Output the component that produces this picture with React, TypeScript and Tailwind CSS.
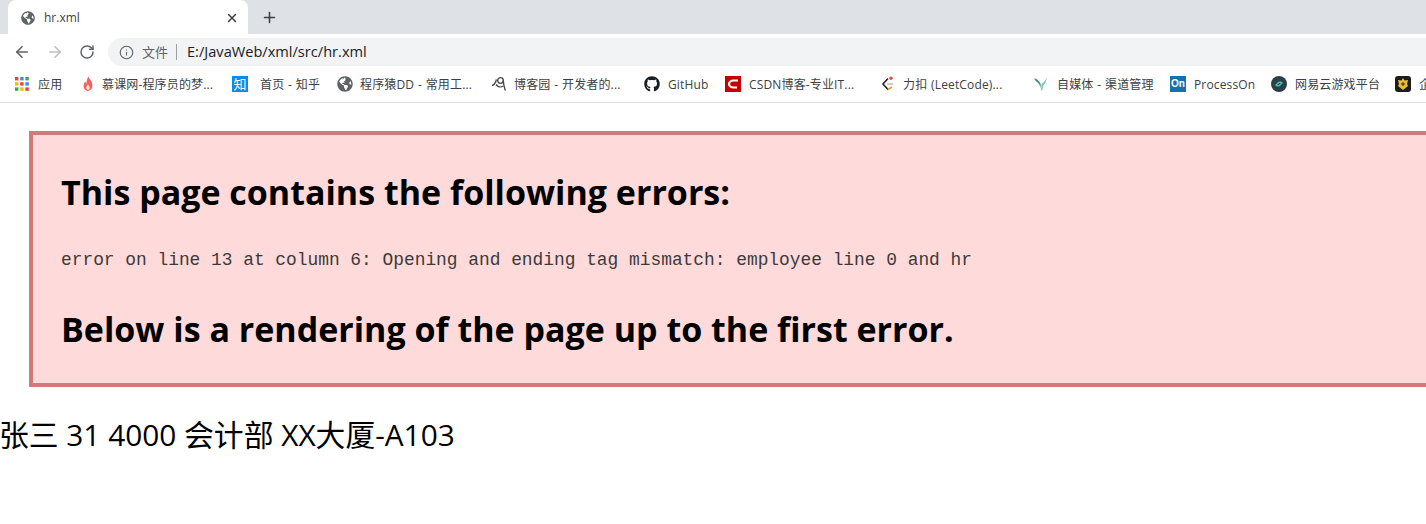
import { ArrowLeft, ArrowRight, Info, Plus, RotateCw, X } from "lucide-react";
import { FaGithub, FaGlobeAmericas } from "react-icons/fa";
import type { ReactNode } from "react";

const uiFont = "font-['Open_Sans','Noto_Sans_CJK_SC',sans-serif]";

const AppsIcon = () => {
    const colors = ["#ea4335", "#4285f4", "#34a853", "#fbbc05", "#ea4335", "#4285f4", "#34a853", "#fbbc05", "#ea4335"];
    return (
        <svg width="14" height="14" viewBox="0 0 14 14">
            {colors.map((c, i) => (
                <rect key={i} x={(i % 3) * 5.2} y={Math.floor(i / 3) * 5.2} width="3.4" height="3.4" fill={c} />
            ))}
        </svg>
    );
};

const Flame = () => (
    <svg width="16" height="16" viewBox="0 0 16 16">
        <path d="M8.5 0.500c.6 2.600 3.900 4.600 3.900 8.800 0 3.200-2 5.700-4.400 5.700s-4.400-2.300-4.400-5.200c0-2 1-3.400 1.800-4.400.2 1 .6 1.700 1.200 2.100C6.300 4.500 7.300 2.500 8.500 0.500z" fill="#f0625a" />
        <path d="M8 8c.3 1.300 1.700 2 1.700 3.700 0 1.300-.8 2.300-1.700 2.300s-1.700-1-1.700-2.200c0-1.600 1.300-2.300 1.700-3.800z" fill="#fde3df" />
    </svg>
);

const Cnblogs = () => (
    <svg width="16" height="16" viewBox="0 0 16 16" fill="none" stroke="#444" strokeWidth="1.300">
        <circle cx="9.500" cy="4.500" r="2.800" />
        <path d="M1 9.500c2-.5 3.500-2.500 4.500-6M5 8.500c2 2.500 5 3 7 1.500M12.300 4.500c.2 3.500.8 6.500 2 10" />
    </svg>
);

const Csdn = () => (
    <div className="w-4 h-4 bg-[#c70000] flex items-center justify-center">
        <svg width="12" height="10" viewBox="0 0 12 10" fill="none">
            <path d="M11 1.500H6.500C4 1.500 2 3 2 5s2 3.500 4.500 3.500H10" stroke="#fff" strokeWidth="2.200" />
        </svg>
    </div>
);

const Leetcode = () => (
    <svg width="16" height="16" viewBox="0 0 16 16" fill="none">
        <path d="M8 2.500 3 8l5 5.500" stroke="#222" strokeWidth="1.600" />
        <path d="M8 13.500l4-2.500" stroke="#f0a020" strokeWidth="1.600" />
        <path d="M7 8h6.500" stroke="#bbb" strokeWidth="1.400" />
        <circle cx="11" cy="2.200" r="1.800" fill="#e05050" />
    </svg>
);

const Bird = () => (
    <svg width="16" height="16" viewBox="0 0 16 16">
        <path d="M1 2.500c3 0 5 2 6.500 5L8 12 6 8C4.500 6.500 2.500 5 1 2.500z" fill="#4f8f8c" />
        <path d="M14 1c-1 3-3 5-5.500 7L8 15c2-1 2-3 2-5 2-2 3.500-5 4-9z" fill="#7cc9a8" />
    </svg>
);

const ProcessOn = () => (
    <div className="w-4 h-4 bg-[#1672ad] text-white text-[10px] font-bold leading-4 text-center font-['Liberation_Sans',sans-serif]">
        On
    </div>
);

const Netease = () => (
    <svg width="16" height="16" viewBox="0 0 16 16" fill="none">
        <circle cx="8" cy="8" r="8" fill="#2c3e46" />
        <path d="M4.500 9.500 8 6.200h2.500M11.500 6.500 8 9.800H5.500" stroke="#39c7a5" strokeWidth="1.500" />
    </svg>
);

const Crest = () => (
    <svg width="16" height="16" viewBox="0 0 16 16">
        <rect width="16" height="16" rx="3" fill="#1c1c1c" />
        <path d="M8 2l1.500 2.500L13 4l-1 4 1 2-5 4-5-4 1-2-1-4 3.500.5z" fill="#e8bd3c" />
        <circle cx="8" cy="8" r="1.800" fill="#6b4a10" />
    </svg>
);

const Zhihu = () => (
    <div className="w-4 h-4 bg-[#0f88eb] text-white text-[13px] leading-4 text-center">知</div>
);

const bookmarks: { width: string; gap: string; icon: ReactNode; label: string }[] = [
    { width: "w-[65px]", gap: "gap-[9px]", icon: <AppsIcon />, label: "应用" },
    { width: "w-[152px]", gap: "gap-[6px]", icon: <Flame />, label: "慕课网-程序员的梦..." },
    { width: "w-[105px]", gap: "gap-[12px]", icon: <Zhihu />, label: "首页 - 知乎" },
    { width: "w-[154px]", gap: "gap-[7px]", icon: <FaGlobeAmericas className="w-4 h-4 text-[#5f6368]" />, label: "程序猿DD - 常用工..." },
    { width: "w-[153px]", gap: "gap-[7px]", icon: <Cnblogs />, label: "博客园 - 开发者的..." },
    { width: "w-[81px]", gap: "gap-[8px]", icon: <FaGithub className="w-4 h-4 text-[#1b1f23]" />, label: "GitHub" },
    { width: "w-[155px]", gap: "gap-[8px]", icon: <Csdn />, label: "CSDN博客-专业IT..." },
    { width: "w-[153px]", gap: "gap-[7px]", icon: <Leetcode />, label: "力扣 (LeetCode)..." },
    { width: "w-[137px]", gap: "gap-[8px]", icon: <Bird />, label: "自媒体 - 渠道管理" },
    { width: "w-[101px]", gap: "gap-[8px]", icon: <ProcessOn />, label: "ProcessOn" },
    { width: "w-[124px]", gap: "gap-[8px]", icon: <Netease />, label: "网易云游戏平台" },
    { width: "w-[60px]", gap: "gap-[8px]", icon: <Crest />, label: "企业" },
];

export default function App() {
    return (
        <div className="w-[1426px] h-[524px] overflow-hidden bg-white font-['Noto_Sans_CJK_SC',sans-serif]">
            {/* tab strip */}
            <div className="h-[34px] bg-[#dee1e6] flex pl-2">
                <div className="w-[240px] h-[34px] flex items-center bg-white rounded-t-[8px] pl-[13px] pr-[9px] pt-px">
                    <FaGlobeAmericas className="w-[14px] h-[14px] text-[#5f6368]" />
                    <span className={`ml-[9px] text-[12px] text-[#3c4043] ${uiFont}`}>hr.xml</span>
                    <X size={14} strokeWidth={2.500} className="ml-auto text-[#3c4043]" />
                </div>
                <div className="h-[34px] flex items-center ml-[13px] pt-px">
                    <Plus size={17} strokeWidth={2.200} className="text-[#3c4043]" />
                </div>
            </div>
            {/* toolbar */}
            <div className="h-[32px] flex items-end">
                <div className="w-[108px] h-[28px] flex items-center pl-[13px] gap-[15px]">
                    <ArrowLeft size={18} strokeWidth={2.200} className="text-[#5f6368]" />
                    <ArrowRight size={18} strokeWidth={2.200} className="text-[#bdc1c6]" />
                    <RotateCw size={16} strokeWidth={2.200} className="text-[#5f6368]" />
                </div>
                <div className="flex-1 h-[28px] bg-[#f1f3f4] rounded-l-[14px] flex items-center pl-[11px]">
                    <Info size={15} strokeWidth={1.800} className="text-[#5f6368]" />
                    <span className="ml-[8px] text-[13px] text-[#5f6368]">文件</span>
                    <span className="ml-[8px] w-px h-[16px] bg-[#9aa0a6]" />
                    <span className={`ml-[10px] -mt-px text-[14.6px] text-[#202124] ${uiFont}`}>E:/JavaWeb/xml/src/hr.xml</span>
                </div>
            </div>
            {/* bookmarks */}
            <div className="h-[37px] flex items-center pl-[15px] border-b border-[#dadce0] overflow-hidden">
                {bookmarks.map((b) => (
                    <div key={b.label} className={`${b.width} ${b.gap} shrink-0 flex items-center`}>
                        <div className="shrink-0">{b.icon}</div>
                        <span className={`pt-px whitespace-nowrap text-[12px] tracking-[0.15px] [word-spacing:0.5px] text-[#3c4043] ${uiFont}`}>{b.label}</span>
                    </div>
                ))}
            </div>
            {/* parser error page */}
            <div className="w-[1500px] ml-[29px] mt-[28px] h-[256px] border-4 border-[#d07a7a] bg-[#ffdada] pl-[28px] flow-root">
                <h3 className={`mt-[33px] text-[34px] leading-[48px] font-bold text-black ${uiFont}`}>
                    This page contains the following errors:
                </h3>
                <div className="mt-[32px] text-[17.87px] leading-[24px] text-[#3a3a3a] font-['Liberation_Mono',monospace] whitespace-pre">
                    error on line 13 at column 6: Opening and ending tag mismatch: employee line 0 and hr
                </div>
                <h3 className={`mt-[33px] text-[34px] leading-[48px] font-bold text-black ${uiFont}`}>
                    Below is a rendering of the page up to the first error.
                </h3>
            </div>
            <div className={`mt-[27px] -ml-px text-[29.8px] leading-[42px] text-black ${uiFont}`}>张三 31 4000 会计部 XX大厦-A103</div>
        </div>
    );
}
